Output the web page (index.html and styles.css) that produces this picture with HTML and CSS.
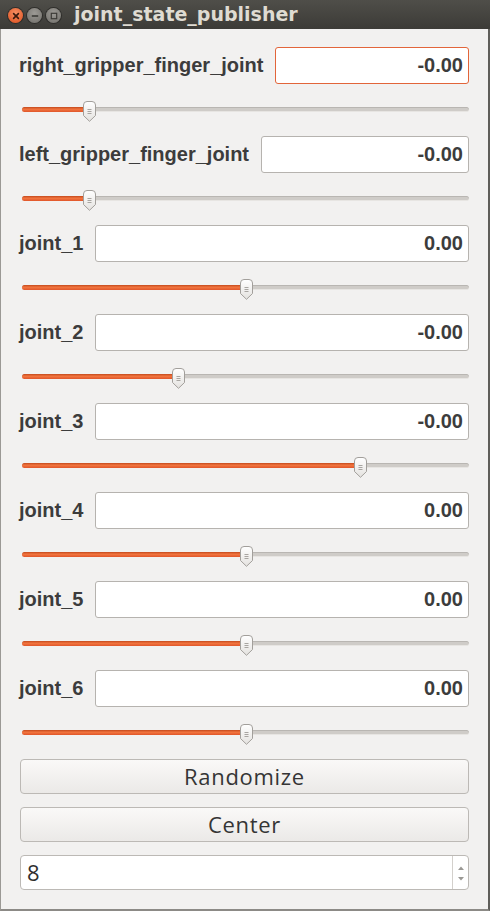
FILE: index.html
```html
<!DOCTYPE html>
<html>
<head>
<meta charset="utf-8">
<link rel="stylesheet" href="styles.css">
</head>
<body>
<div class="window">
  <div class="titlebar">
    <div class="wbtns">
      <span class="wbtn close"><svg width="14" height="14" viewBox="0 0 14 14"><path d="M4.6 4.6 L9.4 9.4 M9.4 4.6 L4.6 9.4" stroke="#3a1a0e" stroke-width="1.6" stroke-linecap="round"/></svg></span>
      <span class="wbtn"><svg width="14" height="14" viewBox="0 0 14 14"><path d="M3.8 7 H10.2" stroke="#3c3b37" stroke-width="1.6"/></svg></span>
      <span class="wbtn"><svg width="14" height="14" viewBox="0 0 14 14"><rect x="4.3" y="4.3" width="5.4" height="5.4" fill="none" stroke="#3c3b37" stroke-width="1.2"/></svg></span>
    </div>
    <div class="title">joint_state_publisher</div>
  </div>
  <div class="content">
    <div class="joint">
      <div class="field"><span class="name">right_gripper_finger_joint</span><div class="value focused">-0.00</div></div>
      <div class="slider"><div class="groove"><div class="fill" style="width:15%"></div></div><div class="handle" style="left:15%"><svg width="13" height="21" viewBox="0 0 13 21"><defs><linearGradient id="hg" x1="0" y1="0" x2="0" y2="1"><stop offset="0" stop-color="#ffffff"/><stop offset="1" stop-color="#e4e2df"/></linearGradient></defs><path d="M0.5 4 Q0.5 0.5 4 0.5 H9 Q12.5 0.5 12.5 4 V14.5 L6.5 20.3 L0.5 14.5 Z" fill="url(#hg)" stroke="#a29f9b"/><path d="M4.5 8.5 H8.5 M4.5 10.5 H8.5 M4.5 12.5 H8.5" stroke="#a8a5a1" stroke-width="1"/></svg></div></div>
    </div>
    <div class="joint">
      <div class="field"><span class="name">left_gripper_finger_joint</span><div class="value">-0.00</div></div>
      <div class="slider"><div class="groove"><div class="fill" style="width:15%"></div></div><div class="handle" style="left:15%"><svg width="13" height="21" viewBox="0 0 13 21"><path d="M0.5 4 Q0.5 0.5 4 0.5 H9 Q12.5 0.5 12.5 4 V14.5 L6.5 20.3 L0.5 14.5 Z" fill="url(#hg)" stroke="#a29f9b"/><path d="M4.5 8.5 H8.5 M4.5 10.5 H8.5 M4.5 12.5 H8.5" stroke="#a8a5a1" stroke-width="1"/></svg></div></div>
    </div>
    <div class="joint">
      <div class="field"><span class="name">joint_1</span><div class="value">0.00</div></div>
      <div class="slider"><div class="groove"><div class="fill" style="width:50%"></div></div><div class="handle" style="left:50%"><svg width="13" height="21" viewBox="0 0 13 21"><path d="M0.5 4 Q0.5 0.5 4 0.5 H9 Q12.5 0.5 12.5 4 V14.5 L6.5 20.3 L0.5 14.5 Z" fill="url(#hg)" stroke="#a29f9b"/><path d="M4.5 8.5 H8.5 M4.5 10.5 H8.5 M4.5 12.5 H8.5" stroke="#a8a5a1" stroke-width="1"/></svg></div></div>
    </div>
    <div class="joint">
      <div class="field"><span class="name">joint_2</span><div class="value">-0.00</div></div>
      <div class="slider"><div class="groove"><div class="fill" style="width:35%"></div></div><div class="handle" style="left:35%"><svg width="13" height="21" viewBox="0 0 13 21"><path d="M0.5 4 Q0.5 0.5 4 0.5 H9 Q12.5 0.5 12.5 4 V14.5 L6.5 20.3 L0.5 14.5 Z" fill="url(#hg)" stroke="#a29f9b"/><path d="M4.5 8.5 H8.5 M4.5 10.5 H8.5 M4.5 12.5 H8.5" stroke="#a8a5a1" stroke-width="1"/></svg></div></div>
    </div>
    <div class="joint">
      <div class="field"><span class="name">joint_3</span><div class="value">-0.00</div></div>
      <div class="slider"><div class="groove"><div class="fill" style="width:75.6%"></div></div><div class="handle" style="left:75.6%"><svg width="13" height="21" viewBox="0 0 13 21"><path d="M0.5 4 Q0.5 0.5 4 0.5 H9 Q12.5 0.5 12.5 4 V14.5 L6.5 20.3 L0.5 14.5 Z" fill="url(#hg)" stroke="#a29f9b"/><path d="M4.5 8.5 H8.5 M4.5 10.5 H8.5 M4.5 12.5 H8.5" stroke="#a8a5a1" stroke-width="1"/></svg></div></div>
    </div>
    <div class="joint">
      <div class="field"><span class="name">joint_4</span><div class="value">0.00</div></div>
      <div class="slider"><div class="groove"><div class="fill" style="width:50%"></div></div><div class="handle" style="left:50%"><svg width="13" height="21" viewBox="0 0 13 21"><path d="M0.5 4 Q0.5 0.5 4 0.5 H9 Q12.5 0.5 12.5 4 V14.5 L6.5 20.3 L0.5 14.5 Z" fill="url(#hg)" stroke="#a29f9b"/><path d="M4.5 8.5 H8.5 M4.5 10.5 H8.5 M4.5 12.5 H8.5" stroke="#a8a5a1" stroke-width="1"/></svg></div></div>
    </div>
    <div class="joint">
      <div class="field"><span class="name">joint_5</span><div class="value">0.00</div></div>
      <div class="slider"><div class="groove"><div class="fill" style="width:50%"></div></div><div class="handle" style="left:50%"><svg width="13" height="21" viewBox="0 0 13 21"><path d="M0.5 4 Q0.5 0.5 4 0.5 H9 Q12.5 0.5 12.5 4 V14.5 L6.5 20.3 L0.5 14.5 Z" fill="url(#hg)" stroke="#a29f9b"/><path d="M4.5 8.5 H8.5 M4.5 10.5 H8.5 M4.5 12.5 H8.5" stroke="#a8a5a1" stroke-width="1"/></svg></div></div>
    </div>
    <div class="joint">
      <div class="field"><span class="name">joint_6</span><div class="value">0.00</div></div>
      <div class="slider"><div class="groove"><div class="fill" style="width:50%"></div></div><div class="handle" style="left:50%"><svg width="13" height="21" viewBox="0 0 13 21"><path d="M0.5 4 Q0.5 0.5 4 0.5 H9 Q12.5 0.5 12.5 4 V14.5 L6.5 20.3 L0.5 14.5 Z" fill="url(#hg)" stroke="#a29f9b"/><path d="M4.5 8.5 H8.5 M4.5 10.5 H8.5 M4.5 12.5 H8.5" stroke="#a8a5a1" stroke-width="1"/></svg></div></div>
    </div>
    <div class="buttons">
      <div class="btn">Randomize</div>
      <div class="btn">Center</div>
      <div class="spin">
        <span class="spin-val">8</span>
        <span class="spin-arrows">
          <svg width="6" height="4" viewBox="0 0 6 4"><path d="M0 4 L3 0.5 L6 4 Z" fill="#9a9894"/></svg>
          <svg width="6" height="4" viewBox="0 0 6 4"><path d="M0 0 L3 3.5 L6 0 Z" fill="#9a9894"/></svg>
        </span>
      </div>
    </div>
  </div>
</div>
</body>
</html>
```

FILE: styles.css
```css
html, body {
  margin: 0;
  padding: 0;
  background: #f2f1f0;
}
.window {
  width: 490px;
  height: 911px;
  box-sizing: border-box;
  border-left: 1px solid #9b9995;
  border-right: 2px solid #5f5e5a;
  border-bottom: 2px solid #8c8a86;
  background: #f2f1f0;
  display: flex;
  flex-direction: column;
}
.titlebar {
  height: 29px;
  margin-left: -1px;
  margin-right: -2px;
  background: linear-gradient(#4f4e49, #3c3b37);
  display: flex;
  align-items: center;
  flex: none;
}
.wbtns {
  display: flex;
  gap: 4px;
  padding-left: 8px;
  padding-top: 2px;
  width: 66px;
}
.wbtn {
  width: 15px;
  height: 15px;
  border-radius: 50%;
  background: radial-gradient(circle at 50% 35%, #9c9a95, #6f6d68);
  box-shadow: 0 0 0 1px #2f2e2b;
  display: flex;
  align-items: center;
  justify-content: center;
}
.wbtn.close {
  background: radial-gradient(circle at 50% 35%, #f58f63, #de4e1c);
}
.title {
  font-family: "DejaVu Sans", sans-serif;
  font-weight: bold;
  font-size: 19px;
  color: #dfdbd2;
  line-height: 29px;
}
.content {
  padding: 18px 19px 0 18px;
  display: flex;
  flex-direction: column;
}
.joint {
  display: flex;
  flex-direction: column;
}
.field {
  display: flex;
  align-items: center;
  height: 37px;
  gap: 12px;
}
.name {
  font-family: "Liberation Sans", Arial, sans-serif;
  font-weight: bold;
  font-size: 20px;
  color: #3c3c3c;
  white-space: nowrap;
}
.value {
  flex: 1;
  height: 37px;
  box-sizing: border-box;
  border: 1px solid #b6b3af;
  border-radius: 3px;
  background: #ffffff;
  font-family: "Liberation Sans", Arial, sans-serif;
  font-weight: bold;
  font-size: 20px;
  color: #3c3c3c;
  text-align: right;
  padding-right: 5px;
  line-height: 35px;
}
.value.focused {
  border-color: #e2653a;
}
.slider {
  position: relative;
  height: 52px;
  margin-left: 3px;
}
.groove {
  position: absolute;
  left: 0;
  right: 0;
  top: 23px;
  height: 5px;
  box-sizing: border-box;
  border-radius: 3px;
  background: #cfccc8;
  border-top: 1px solid #b9b6b2;
  border-bottom: 1px solid #e7e5e2;
}
.fill {
  height: 5px;
  margin-top: -1px;
  border-radius: 3px;
  background: linear-gradient(#c4491c, #f2753f 45%, #e0562a);
}
.handle {
  position: absolute;
  top: 17px;
  width: 13px;
  height: 21px;
  margin-left: -6px;
}
.handle svg {
  display: block;
}
.buttons {
  display: flex;
  flex-direction: column;
  gap: 13px;
  padding-left: 1px;
}
.btn {
  height: 35px;
  box-sizing: border-box;
  border: 1px solid #bcb9b5;
  border-radius: 4px;
  background: linear-gradient(#faf9f8, #ebe9e7);
  font-family: "Open Sans", sans-serif;
  font-size: 22px;
  letter-spacing: 0.7px;
  color: #353535;
  text-align: center;
  line-height: 32px;
}
.spin {
  height: 35px;
  box-sizing: border-box;
  border: 1px solid #bcb9b5;
  border-radius: 4px;
  background: #ffffff;
  display: flex;
  align-items: center;
}
.spin-val {
  flex: 1;
  font-family: "Open Sans", sans-serif;
  font-size: 22px;
  color: #2f2f2f;
  padding-left: 6px;
  line-height: 33px;
}
.spin-arrows {
  width: 16px;
  height: 33px;
  border-left: 1px solid #d3d0cc;
  display: flex;
  flex-direction: column;
  align-items: center;
  justify-content: space-between;
  padding: 10px 0 8px;
  box-sizing: border-box;
}
.spin-arrows svg {
  display: block;
}
```
